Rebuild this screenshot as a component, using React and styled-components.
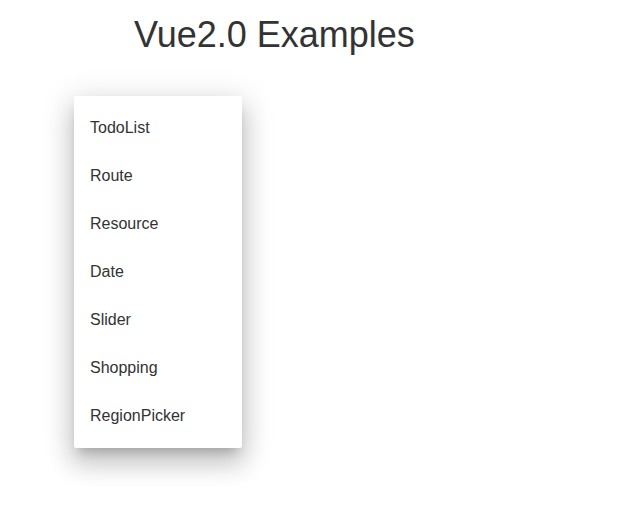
import React from 'react'
import styled, { createGlobalStyle } from 'styled-components'

const GlobalStyle = createGlobalStyle`
  html, body {
    margin: 0;
    padding: 0;
    background: #fff;
    font-family: "Liberation Sans", Arial, sans-serif;
    color: #333;
  }
`

const items = ['TodoList', 'Route', 'Resource', 'Date', 'Slider', 'Shopping', 'RegionPicker']

function App() {
    return (
        <Page>
            <GlobalStyle />
            <Title>Vue2.0 Examples</Title>
            <Menu>
                {items.map(item => (
                    <MenuItem key={item}>{item}</MenuItem>
                ))}
            </Menu>
        </Page>
    )
}

export default App

const Page = styled.div`
    display: flex;
    flex-direction: column;
    align-items: flex-start;
    min-height: 100vh;
    box-sizing: border-box;
    padding: 0 0 60px 74px;
`

const Title = styled.h1`
    margin: 14px 0 0 60px;
    font-size: 36px;
    font-weight: 400;
    line-height: 42px;
    color: #333;
`

const Menu = styled.ul`
    list-style: none;
    margin: 40px 0 0;
    padding: 8px 0;
    width: 168px;
    box-sizing: border-box;
    background: #fff;
    border-radius: 2px;
    box-shadow: 0 8px 10px -5px rgba(0, 0, 0, 0.2),
        0 16px 24px 2px rgba(0, 0, 0, 0.14),
        0 6px 30px 5px rgba(0, 0, 0, 0.12);
`

const MenuItem = styled.li`
    height: 48px;
    line-height: 48px;
    padding: 0 16px;
    font-size: 16px;
    color: #333;
    cursor: pointer;
`
